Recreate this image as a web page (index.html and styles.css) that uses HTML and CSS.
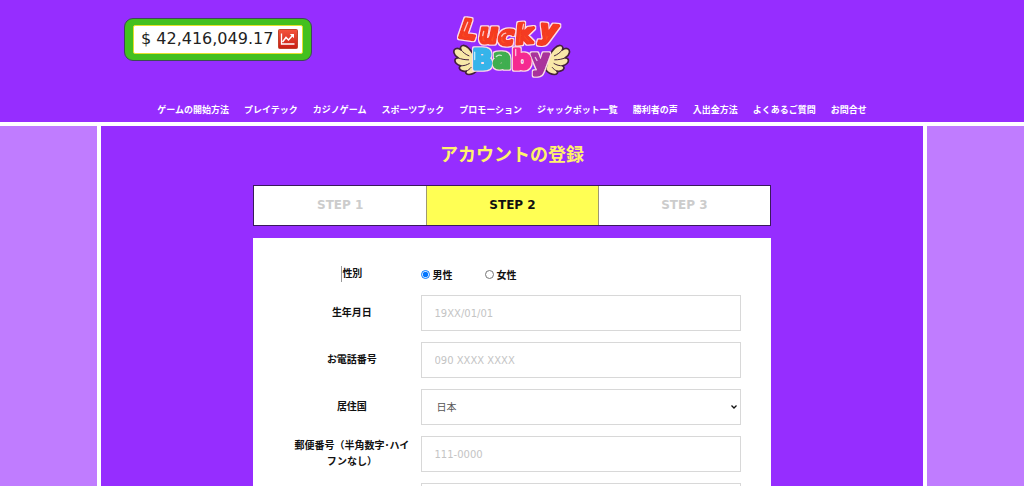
FILE: index.html
```html
<!DOCTYPE html>
<html lang="ja">
<head>
  <meta charset="UTF-8">
  <meta name="viewport" content="width=device-width, initial-scale=1.0">
  <title>アカウントの登録 | Lucky Baby</title>
  <link rel="stylesheet" href="styles.css">
</head>
<body>
  <header class="site-header">
    <div class="header-top">
      <div class="jackpot">
        <div class="jackpot-inner">
          <span class="jackpot-amount">$ 42,416,049.17</span>
          <svg class="jackpot-icon" viewBox="0 0 20 20" aria-hidden="true">
            <defs>
              <linearGradient id="icon-red" x1="0" y1="0" x2="0" y2="1">
                <stop offset="0" stop-color="#f4553c"/>
                <stop offset="1" stop-color="#c81e14"/>
              </linearGradient>
            </defs>
            <rect x="0.5" y="0.5" width="19" height="19" rx="1" fill="url(#icon-red)" stroke="#c0442c"/>
            <path d="M3.500 4.500v10.500H16.500" fill="none" stroke="#fff" stroke-width="1.3"/>
            <path d="M4.500 13l3.500-4.500 2.500 2.500 4-4.500" fill="none" stroke="#fff" stroke-width="1.5"/>
            <path d="M11.800 5h4.200v4.200z" fill="#fff"/>
          </svg>
        </div>
      </div>
      <a class="logo" href="#" aria-label="Lucky Baby">
        <svg viewBox="0 0 354 200" aria-hidden="true">
          <defs>
            <linearGradient id="lucky-red" x1="0" y1="0" x2="0" y2="1">
              <stop offset="0" stop-color="#ee1c1c"/>
              <stop offset="1" stop-color="#ff6424"/>
            </linearGradient>
            <!-- pale rim round each letter -->
            <filter id="rim" x="-10%" y="-20%" width="120%" height="140%">
              <feMorphology in="SourceAlpha" operator="dilate" radius="3" result="wide"/>
              <feFlood flood-color="#ffdfe8"/>
              <feComposite in2="wide" operator="in" result="edge"/>
              <feMerge>
                <feMergeNode in="edge"/>
                <feMergeNode in="SourceGraphic"/>
              </feMerge>
            </filter>
            <g id="wing">
              <path d="M66 128C56 112 44 92 30 94c-8 1-9 8-6 13C12 98 0 104 3 116c2 8 7 12 12 15-10 0-12 10-5 17 4 4 9 6 13 7-7 4-4 12 4 15 4 2 9 2 13 1-4 5 0 10 8 10 12 0 20-6 26-14z" fill="#f8e8a8" stroke="#43203c" stroke-width="5" stroke-linejoin="round"/>
              <path d="M24 107c6 8 14 14 24 18M15 131c10 4 20 6 32 6M23 155c10 0 18-2 26-7M40 171c6-3 10-6 14-11" fill="none" stroke="#43203c" stroke-width="3" stroke-linecap="round"/>
            </g>
          </defs>
          <use href="#wing"/>
          <use href="#wing" transform="translate(352 0) scale(-1 1)"/>
          <g class="logo-word" filter="url(#rim)">
            <text class="lucky" x="18 78 136 190 258" y="70 88 92 90 72" rotate="8 0 0 -6 6">Lucky</text>
          </g>
          <g class="logo-word" filter="url(#rim)">
            <text class="baby" x="58 120 178 236" y="166 163 165 166"><tspan class="blue">B</tspan><tspan class="green">a</tspan><tspan class="pink">b</tspan><tspan class="plum">y</tspan></text>
          </g>
          <path d="M44 24l-10 26M92 52l-3 12M146 66q4-8 12-9M212 30l-3 14M65 114v22M130 127q8-6 15-3M188 106v18M247 130l5 9" fill="none" stroke="#fff" stroke-opacity="0.7" stroke-width="4" stroke-linecap="round"/>
        </svg>
      </a>
    </div>
    <nav class="main-nav">
      <a href="#">ゲームの開始方法</a>
      <a href="#">プレイテック</a>
      <a href="#">カジノゲーム</a>
      <a href="#">スポーツブック</a>
      <a href="#">プロモーション</a>
      <a href="#">ジャックポット一覧</a>
      <a href="#">勝利者の声</a>
      <a href="#">入出金方法</a>
      <a href="#">よくあるご質問</a>
      <a href="#">お問合せ</a>
    </nav>
  </header>

  <main class="content">
    <h1>アカウントの登録</h1>
    <ol class="steps">
      <li>STEP 1</li>
      <li class="active" aria-current="step">STEP 2</li>
      <li>STEP 3</li>
    </ol>

    <form class="register-form">
      <div class="form-row gender-row" role="radiogroup" aria-labelledby="gender-label">
        <span class="form-label" id="gender-label"><span class="cursor"></span>性別</span>
        <div class="radios">
          <label><input type="radio" name="gender" value="male" checked>男性</label>
          <label><input type="radio" name="gender" value="female">女性</label>
        </div>
      </div>
      <div class="form-row">
        <label class="form-label" for="birthday">生年月日</label>
        <input class="field" type="text" id="birthday" placeholder="19XX/01/01">
      </div>
      <div class="form-row">
        <label class="form-label" for="phone">お電話番号</label>
        <input class="field" type="tel" id="phone" placeholder="090 XXXX XXXX">
      </div>
      <div class="form-row">
        <label class="form-label" for="country">居住国</label>
        <select class="field" id="country">
          <option>日本</option>
        </select>
      </div>
      <div class="form-row">
        <label class="form-label" for="zip">郵便番号（半角数字･ハイフンなし）</label>
        <input class="field" type="text" id="zip" placeholder="111-0000">
      </div>
      <div class="form-row">
        <input class="field" type="text" name="address" aria-label="住所">
      </div>
    </form>
  </main>
</body>
</html>
```
FILE: styles.css
```css
* {
  box-sizing: border-box;
}

body {
  margin: 0;
  min-height: 100vh;
  display: flex;
  flex-direction: column;
  background-color: #c07cff;
  font-family: "DejaVu Sans", "Noto Sans CJK JP", sans-serif;
  font-size: 10px;
  color: #111;
}

/* Header */
.site-header {
  background-color: #962dff;
  border-bottom: 4px solid #fff;
  padding-top: 14px;
}

.header-top {
  max-width: 776px;
  margin: 0 auto;
  display: grid;
  grid-template-columns: 1fr auto 1fr;
  align-items: start;
}

.jackpot {
  justify-self: start;
  margin-top: 4px;
  padding: 6px 8px;
  background-color: #43c01e;
  border: 1px solid #3c4a58;
  border-radius: 9px;
}

.jackpot-inner {
  display: flex;
  align-items: center;
  gap: 5px;
  height: 29px;
  padding: 0 4px 2px 7px;
  background-color: #fff;
  border: 1px solid #e6e02c;
  border-radius: 2px;
}

.jackpot-amount {
  font-size: 16px;
  line-height: 20px;
  color: #222;
}

.jackpot-icon {
  width: 20px;
  height: 20px;
}

.logo svg {
  display: block;
  width: 118px;
  height: 67px;
}

.logo-word {
  font-family: "DejaVu Sans", sans-serif;
  font-weight: bold;
  stroke-width: 10px;
  stroke-linejoin: round;
}

.lucky {
  font-size: 80px;
  font-style: italic;
  fill: url(#lucky-red);
  stroke: #f43a20;
}

.baby {
  font-size: 80px;
}

.blue {
  fill: #35b4ea;
  stroke: #35b4ea;
}

.green {
  fill: #3fae50;
  stroke: #3fae50;
}

.pink {
  fill: #f52a90;
  stroke: #f52a90;
}

.plum {
  fill: #a9329c;
  stroke: #a9329c;
}

.main-nav {
  display: flex;
  flex-wrap: wrap;
  justify-content: center;
  gap: 4px 15px;
  padding: 22px 10px 4px;
}

.main-nav a {
  color: #fff;
  font-size: 9px;
  font-weight: bold;
  line-height: 15px;
  text-decoration: none;
}

/* Registration */
.content {
  flex: 1;
  width: 81%;
  margin: 0 auto;
  padding-top: 15px;
  background-color: #962dff;
  border: solid #fff;
  border-width: 0 4px;
}

.content h1 {
  margin: 0 0 16px;
  color: #fff36b;
  font-size: 18px;
  line-height: 28px;
  text-align: center;
}

.steps {
  display: grid;
  grid-template-columns: repeat(3, 1fr);
  width: 63%;
  margin: 0 auto 12px;
  padding: 0;
  list-style: none;
  background-color: #fff;
  border: 1px solid #3a1a5c;
}

.steps li {
  color: #ccc;
  font-size: 12px;
  font-weight: bold;
  line-height: 39px;
  text-align: center;
}

.steps li + li {
  border-left: 1px solid #a09a70;
}

.steps .active {
  background-color: #ffff54;
  color: #111;
}

.register-form {
  display: flex;
  flex-direction: column;
  gap: 11px;
  width: 63%;
  margin: 0 auto;
  padding: 26px 30px;
  background-color: #fff;
}

.form-row {
  display: grid;
  grid-template-columns: 3fr 7fr;
  align-items: center;
}

.form-label {
  padding: 0 8px;
  font-weight: bold;
  line-height: 16px;
  text-align: center;
}

.cursor {
  display: inline-block;
  height: 16px;
  border-left: 1px solid #999;
  vertical-align: middle;
}

.gender-row {
  height: 20px;
}

.radios {
  display: flex;
  gap: 32px;
}

.radios label {
  display: flex;
  align-items: center;
  gap: 3px;
  font-weight: bold;
}

.radios input {
  width: 9px;
  height: 9px;
  margin: 0;
}

.field {
  grid-column: 2;
  width: 100%;
  height: 36px;
  padding: 0 13px;
  background-color: #fff;
  border: 1px solid #d8d8d8;
  border-radius: 0;
  color: #555;
  font-family: inherit;
  font-size: 10px;
}

select.field {
  appearance: none;
  padding: 0 15px;
  background-image: url("data:image/svg+xml,%3Csvg xmlns='http://www.w3.org/2000/svg' viewBox='0 0 6 4'%3E%3Cpath d='M.5.5 3 3 5.5.5' fill='none' stroke='%23111' stroke-width='1.3'/%3E%3C/svg%3E");
  background-repeat: no-repeat;
  background-position: right 3px center;
  background-size: 6px 4px;
}

.field::placeholder {
  color: #c4c4c4;
}
```
